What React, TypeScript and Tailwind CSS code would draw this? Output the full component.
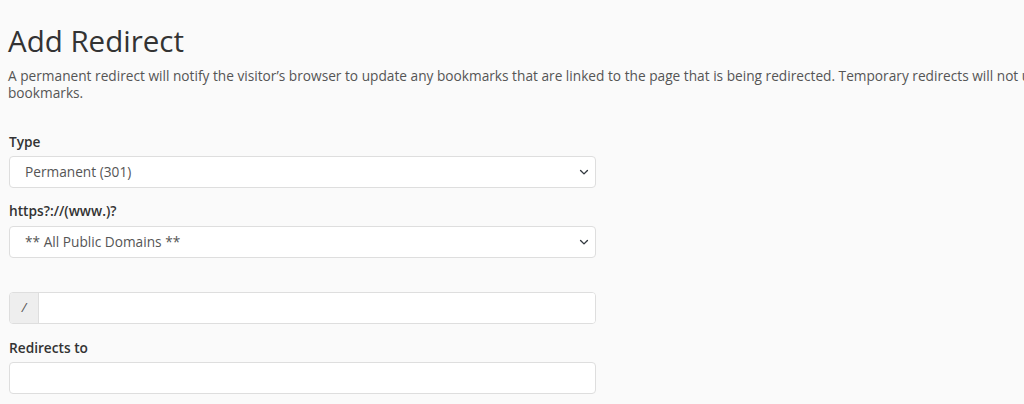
import React from "react"

const font = { fontFamily: '"Open Sans", "Liberation Sans", sans-serif' }

function Chevron() {
  return (
    <svg className="pointer-events-none absolute right-[6px] top-1/2 h-[10px] w-[10px] -translate-y-1/2" viewBox="0 0 16 16" fill="none">
      <path d="M2.5 5.5l5.5 5.5 5.5-5.5" stroke="#343a40" strokeWidth="2.2" strokeLinecap="round" strokeLinejoin="round" />
    </svg>
  )
}

function SelectBox({ value }: { value: string }) {
  return (
    <div className="relative h-[32px] w-[587px] rounded-[4px] border border-[#dedede] bg-white">
      <div className="flex h-full items-center pl-[15px] text-[13.7px] text-[#555]">{value}</div>
      <Chevron />
    </div>
  )
}

export default function App() {
  return (
    <div className="h-[404px] w-[1024px] overflow-hidden bg-[#fafafa] text-[#333]" style={font}>
      <div className="w-[1200px] px-[8px] pt-[24px]">
        <h1 className="text-[29.5px] font-normal leading-[34px] text-[#333]">Add Redirect</h1>
        <p className="mt-[9px] text-[13.7px] leading-[17px] text-[#555]">
          A permanent redirect will notify the visitor’s browser to update any bookmarks that are linked to the page that is being redirected. Temporary redirects will not update the visitor’s bookmarks.
        </p>

        <div className="mt-[31px] flex w-[589px] flex-col pl-[1px]">
          <label className="text-[13.7px] font-semibold leading-[20px] text-[#333]">Type</label>
          <div className="mt-[4px]">
            <SelectBox value="Permanent (301)" />
          </div>

          <label className="mt-[13px] text-[13.7px] font-semibold leading-[20px] text-[#333]">https?://(www.)?</label>
          <div className="mt-[5px]">
            <SelectBox value="** All Public Domains **" />
          </div>

          <div className="mt-[34px] flex h-[32px] w-[587px] overflow-hidden rounded-[4px] border border-[#dedede] bg-white">
            <div className="flex w-[29px] items-center justify-center border-r border-[#dedede] bg-[#eeeeee] text-[13px] italic text-[#555]">/</div>
            <input className="flex-1 bg-white px-3 text-[14px] outline-none" />
          </div>

          <label className="mt-[14px] text-[13.7px] font-semibold leading-[20px] text-[#333]">Redirects to</label>
          <input className="mt-[4px] h-[32px] w-[587px] rounded-[4px] border border-[#dedede] bg-white px-3 text-[14px] outline-none" />
        </div>
      </div>
    </div>
  )
}
